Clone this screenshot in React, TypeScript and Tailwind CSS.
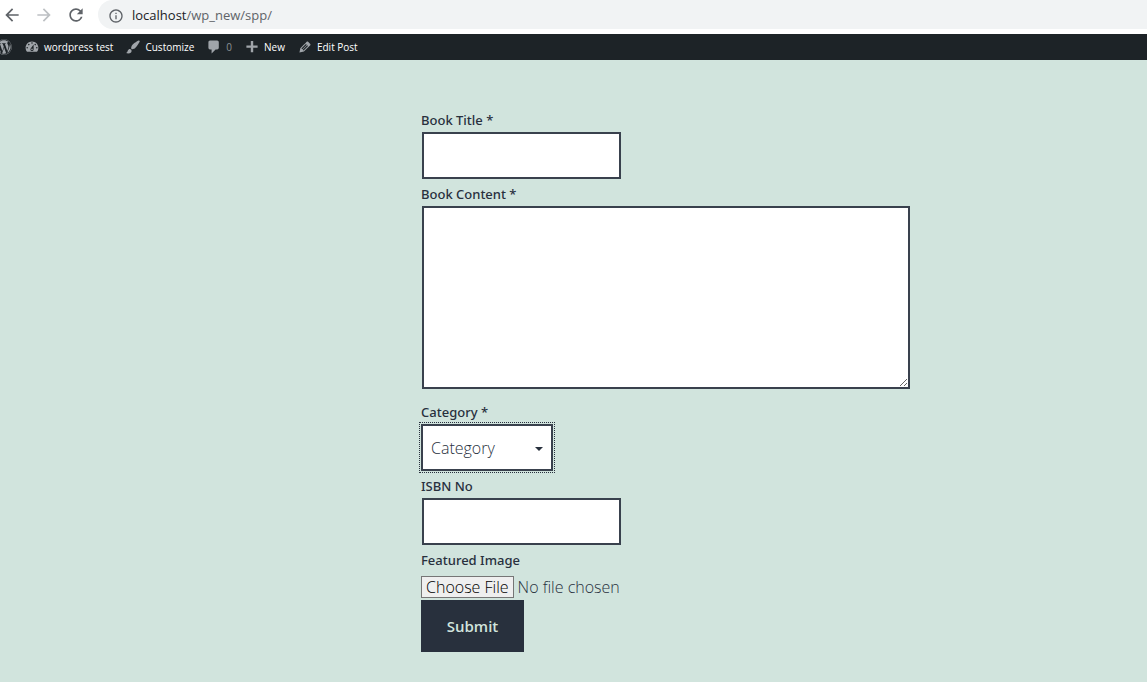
import type { ReactNode } from "react";
import { MdArrowBack, MdArrowForward, MdRefresh, MdInfoOutline } from "react-icons/md";
import { FaWordpress } from "react-icons/fa";

const icons = {
  dashboard:
    "M3.76 16h12.48c1.1-1.37 1.76-3.11 1.76-5 0-4.42-3.58-8-8-8s-8 3.58-8 8c0 1.89.66 3.63 1.76 5zM10 4c.55 0 1 .45 1 1s-.45 1-1 1-1-.45-1-1 .45-1 1-1zM6 6c.55 0 1 .45 1 1s-.45 1-1 1-1-.45-1-1 .45-1 1-1zm8 0c.55 0 1 .45 1 1s-.45 1-1 1-1-.45-1-1 .45-1 1-1zm-5.37 5.55L12 7v6c0 1.1-.9 2-2 2s-2-.9-2-2c0-.57.24-1.08.63-1.45zM4 10c.55 0 1 .45 1 1s-.45 1-1 1-1-.45-1-1 .45-1 1-1zm12 0c.55 0 1 .45 1 1s-.45 1-1 1-1-.45-1-1 .45-1 1-1zm-5 3c0-.55-.45-1-1-1s-1 .45-1 1 .45 1 1 1 1-.45 1-1z",
  brush:
    "M18.33 3.57s.27-.8-.31-1.36c-.53-.52-1.22-.24-1.22-.24-.61.3-5.76 3.47-7.67 5.57-.86.96-2.06 3.79-1.09 4.82.92.98 3.96-.17 4.79-1 2.06-2.06 5.21-7.17 5.5-7.79zM1.4 17.65c2.37-1.56 1.46-3.41 3.23-4.64.93-.65 2.22-.62 3.08.29.63.67.8 2.57-.16 3.46-1.57 1.45-4 1.55-6.15.89z",
  comment:
    "M5 2h9c1.1 0 2 .9 2 2v7c0 1.1-.9 2-2 2h-2l-5 5v-5H5c-1.1 0-2-.9-2-2V4c0-1.1.9-2 2-2z",
  plus: "M17 8v3h-5.500v5.500h-3V11H3V8h5.500V2.500h3V8z",
  pencil:
    "M13.89 3.39l2.71 2.72c.46.46.42 1.24.03 1.64l-8.01 8.02-5.56 1.16 1.16-5.58s7.6-7.63 7.99-8.03c.39-.39 1.22-.39 1.68.07zm-2.73 2.79l-5.59 5.61 1.11 1.11 5.54-5.65zm-2.97 8.23l5.58-5.6-1.07-1.08-5.59 5.6z",
};

function BarLink({ icon, muted, children }: { icon: keyof typeof icons; muted?: boolean; children: ReactNode }) {
  return (
    <a href="#" className="flex items-center gap-1">
      <svg viewBox="0 0 20 20" className="size-4 fill-[#a0a5aa]" aria-hidden="true">
        <path d={icons[icon]} />
      </svg>
      <span className={muted ? "text-[#8c9196]" : "text-white"}>{children}</span>
    </a>
  );
}

function Label({ htmlFor, children }: { htmlFor: string; children: ReactNode }) {
  return (
    <label
      htmlFor={htmlFor}
      className="block font-['Noto_Sans','Open_Sans',sans-serif] text-[13px] leading-6 font-medium text-[#28303d]"
    >
      {children}
    </label>
  );
}

const box = "block border-2 border-[#39414d] bg-white px-2 text-base font-light text-[#28303d] outline-none";

export default function App() {
  return (
    <div className="flex min-h-screen flex-col bg-[#d1e4dd] font-['Open_Sans','Noto_Sans',sans-serif]">
      <header className="flex h-[34px] items-start bg-white pl-1">
        <nav className="flex h-[30px] items-center gap-4 text-[#5f6368]" aria-label="Browser">
          <button type="button" aria-label="Back">
            <MdArrowBack className="-ml-0.5 size-5" />
          </button>
          <button type="button" aria-label="Forward" className="-ml-1 text-[#bdc0c3]">
            <MdArrowForward className="size-5" />
          </button>
          <button type="button" aria-label="Reload" className="-ml-1">
            <MdRefresh className="size-5" />
          </button>
        </nav>
        <div className="ml-3 flex h-[29px] flex-1 items-center gap-2 rounded-l-full bg-[#f1f3f4] pt-0.5 pl-2.5">
          <MdInfoOutline className="size-4 shrink-0 text-[#5f6368]" />
          <p className="text-[13px] text-[#5f6368]">
            <span className="text-[#202124]">localhost</span>/wp_new/spp/
          </p>
        </div>
      </header>

      <nav className="flex h-[26px] items-center gap-3 overflow-hidden bg-[#1d2327] text-[10px]" aria-label="Toolbar">
        <a href="#" aria-label="About WordPress" className="-ml-1">
          <FaWordpress className="size-4 text-[#a0a5aa]" />
        </a>
        <BarLink icon="dashboard">wordpress test</BarLink>
        <BarLink icon="brush">Customize</BarLink>
        <BarLink icon="comment" muted>0</BarLink>
        <BarLink icon="plus">New</BarLink>
        <BarLink icon="pencil">Edit Post</BarLink>
      </nav>

      <main className="grid grid-cols-[421fr_490fr_236fr] pt-12 pb-[30px]">
        <form className="col-start-2" onSubmit={(e) => e.preventDefault()}>
          <Label htmlFor="title">Book Title *</Label>
          <input id="title" type="text" className={`${box} ml-px h-[47px] w-[199px]`} />

          <div className="mt-[3px]">
            <Label htmlFor="content">Book Content *</Label>
            <textarea id="content" className={`${box} mx-px h-[183px] w-[calc(100%-2px)] resize`} />
          </div>

          <div className="mt-[11px]">
            <Label htmlFor="category">Category *</Label>
            <div className="relative w-[132px] outline-1 outline-offset-1 outline-dotted outline-[#28303d]">
              <select id="category" className={`${box} h-[47px] w-full appearance-none`}>
                <option>Category</option>
              </select>
              <svg
                viewBox="0 0 8 4"
                className="pointer-events-none absolute top-[23px] right-2.5 h-1 w-2 fill-[#28303d]"
                aria-hidden="true"
              >
                <path d="M0 0h8L4 4z" />
              </svg>
            </div>
          </div>

          <div className="mt-[3px]">
            <Label htmlFor="isbn">ISBN No</Label>
            <input id="isbn" type="text" className={`${box} ml-px h-[47px] w-[199px]`} />
          </div>

          <div className="mt-[3px]">
            <Label htmlFor="image">Featured Image</Label>
            <input
              id="image"
              type="file"
              className="mt-1 block h-6 w-full text-base leading-5 font-light text-[#28303d] file:mr-1 file:h-[22px] file:rounded-none file:border file:border-solid file:border-[#767676] file:bg-[#efefef] file:px-1 file:leading-5 file:text-black"
            />
          </div>

          <button type="submit" className="block h-[52px] w-[103px] bg-[#28303d] text-[15px] font-semibold text-[#d1e4dd]">
            Submit
          </button>
        </form>
      </main>
    </div>
  );
}
